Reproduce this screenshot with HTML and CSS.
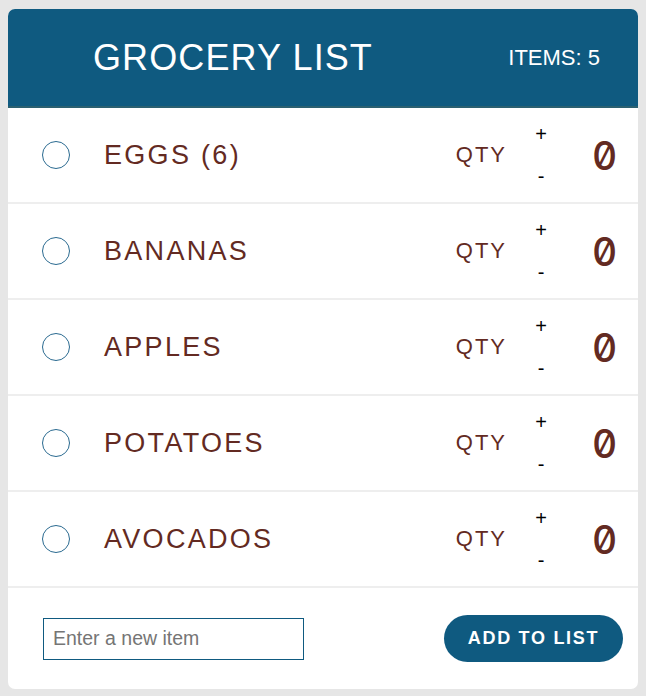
FILE: index.html
```html
<!DOCTYPE html>
<html>
<head>
<meta charset="utf-8">
<link rel="stylesheet" href="styles.css">
</head>
<body>
<div class="card">
  <header class="header">
    <h1 class="title">GROCERY LIST</h1>
    <div class="count">ITEMS: 5</div>
  </header>
  <ul class="list">
    <li class="row">
      <span class="radio"></span>
      <span class="name">EGGS (6)</span>
      <span class="qty">QTY</span>
      <span class="steps"><button class="step">+</button><button class="step">-</button></span>
      <span class="num">0</span>
    </li>
    <li class="row">
      <span class="radio"></span>
      <span class="name">BANANAS</span>
      <span class="qty">QTY</span>
      <span class="steps"><button class="step">+</button><button class="step">-</button></span>
      <span class="num">0</span>
    </li>
    <li class="row">
      <span class="radio"></span>
      <span class="name">APPLES</span>
      <span class="qty">QTY</span>
      <span class="steps"><button class="step">+</button><button class="step">-</button></span>
      <span class="num">0</span>
    </li>
    <li class="row">
      <span class="radio"></span>
      <span class="name">POTATOES</span>
      <span class="qty">QTY</span>
      <span class="steps"><button class="step">+</button><button class="step">-</button></span>
      <span class="num">0</span>
    </li>
    <li class="row">
      <span class="radio"></span>
      <span class="name">AVOCADOS</span>
      <span class="qty">QTY</span>
      <span class="steps"><button class="step">+</button><button class="step">-</button></span>
      <span class="num">0</span>
    </li>
  </ul>
  <form class="footer">
    <input class="new-item" type="text" placeholder="Enter a new item">
    <button class="add" type="button">ADD TO LIST</button>
  </form>
</div>
</body>
</html>
```

FILE: styles.css
```css
html, body {
  margin: 0;
  padding: 0;
}
body {
  background: #e6e6e6;
  padding: 9px 8px 0 8px;
  font-family: "Liberation Sans", Arial, sans-serif;
}
.card {
  width: 630px;
  height: 680px;
  background: #fff;
  border-radius: 7px;
  overflow: hidden;
  display: flex;
  flex-direction: column;
}
.header {
  height: 97px;
  background: #0f5a80;
  border-bottom: 2px solid #2b6070;
  display: flex;
  align-items: center;
  justify-content: space-between;
  padding: 0 38px 0 85px;
  color: #fff;
}
.title {
  margin: 0;
  font-weight: normal;
  font-size: 36px;
  letter-spacing: 1.1px;
}
.count {
  font-size: 22px;
}
.list {
  list-style: none;
  margin: 0;
  padding: 0;
}
.row {
  height: 94px;
  border-bottom: 2px solid #eeeeee;
  display: flex;
  align-items: center;
  padding: 0 22px 0 34px;
  color: #632a22;
}
.radio {
  width: 26px;
  height: 26px;
  border: 1.5px solid #2a6a90;
  border-radius: 50%;
  flex: none;
}
.name {
  flex: 1;
  margin-left: 34px;
  font-size: 27px;
  letter-spacing: 2.3px;
}
.qty {
  font-size: 22px;
  letter-spacing: 2px;
}
.steps {
  display: flex;
  flex-direction: column;
  align-items: center;
  gap: 20px;
  margin-left: 26px;
}
.step {
  background: none;
  border: none;
  padding: 0;
  font-family: "Liberation Sans", Arial, sans-serif;
  font-size: 20px;
  line-height: 22px;
  color: #000;
  width: 16px;
}
.num {
  width: 24px;
  text-align: center;
  margin-left: 43px;
  font-family: Inter, sans-serif;
  font-feature-settings: "zero" 1, "tnum" 1;
  font-variant-numeric: slashed-zero tabular-nums;
  font-size: 39px;
  font-weight: 500;
}
.footer {
  flex: 1;
  margin: 0;
  display: flex;
  align-items: center;
  justify-content: space-between;
  padding: 0 15px 0 35px;
}
.new-item {
  box-sizing: border-box;
  width: 261px;
  height: 42px;
  border: 1px solid #0f5a80;
  padding: 0 9px;
  font-family: "Liberation Sans", Arial, sans-serif;
  font-size: 19.5px;
  outline: none;
}
.new-item::placeholder {
  color: #757575;
}
.add {
  width: 179px;
  height: 47px;
  border: none;
  border-radius: 24px;
  background: #0f5a80;
  color: #fff;
  font-family: "Liberation Sans", Arial, sans-serif;
  font-weight: bold;
  font-size: 18px;
  letter-spacing: 1.7px;
  padding: 0;
}
```
